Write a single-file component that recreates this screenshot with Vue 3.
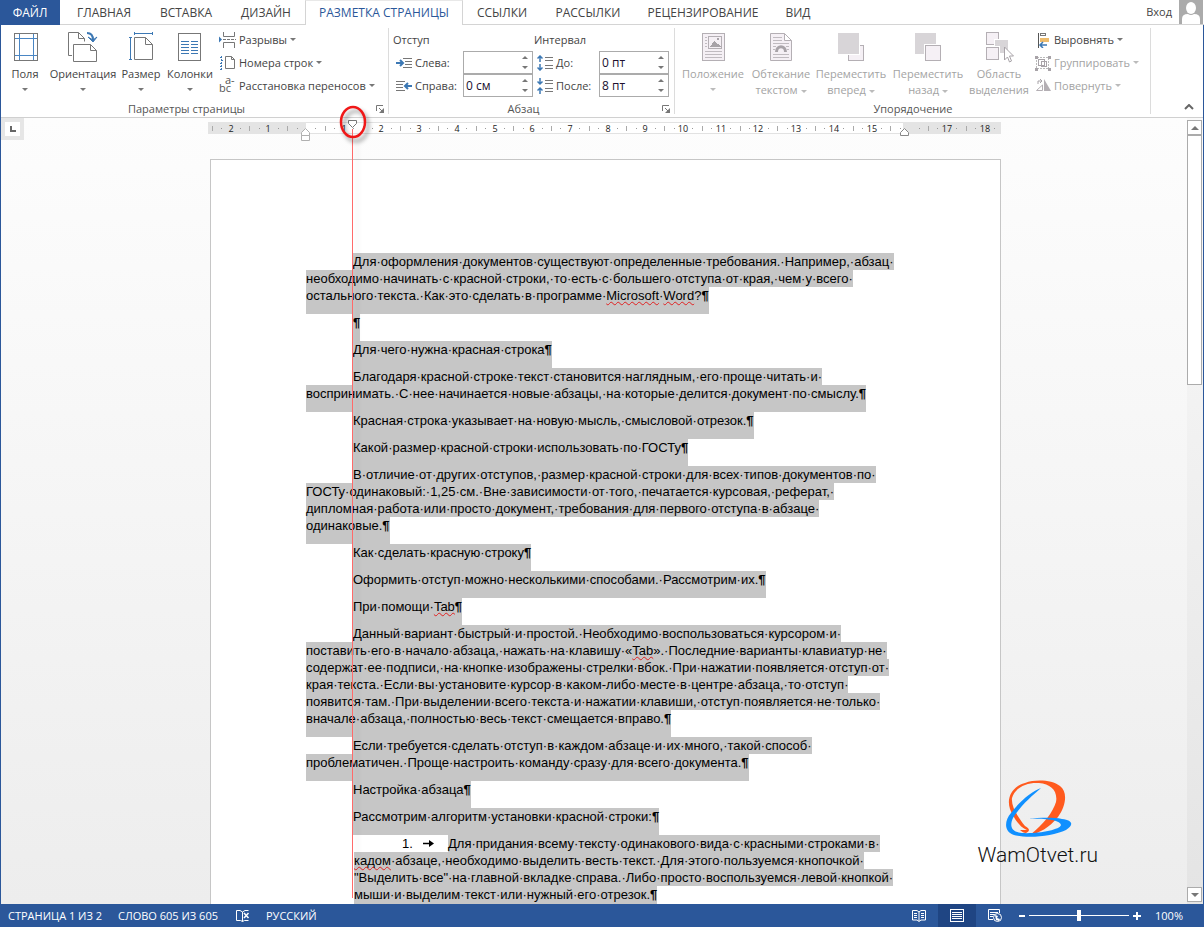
<script setup>
import { ref } from 'vue'

const tabs = [
  { name: 'ГЛАВНАЯ', size: 'w82' },
  { name: 'ВСТАВКА', size: 'w82' },
  { name: 'ДИЗАЙН', size: 'w78' },
  { name: 'РАЗМЕТКА СТРАНИЦЫ', size: 'w158', active: true },
  { name: 'ССЫЛКИ', size: 'w78' },
  { name: 'РАССЫЛКИ', size: 'w94' },
  { name: 'РЕЦЕНЗИРОВАНИЕ', size: 'w136' },
  { name: 'ВИД', size: 'w54' },
]

const left = ref('')
const right = ref('0 см')
const before = ref('0 пт')
const after = ref('8 пт')
const zoom = ref(50)

const origin = 98
const cm = 37.7
const rulerNumbers = [-2, -1, 1, 2, 3, 4, 5, 6, 7, 8, 9, 10, 11, 12, 13, 14, 15, 17, 18].map((n) => ({
  label: Math.abs(n),
  x: Math.round(origin + n * cm),
}))
const halves = Array.from({ length: 21 }, (_, i) => Math.round(origin + (i - 2.5) * cm) + 0.5)
const quarters = []
for (let i = -2; i <= 18; i++) {
  quarters.push(Math.round(origin + (i - 0.25) * cm))
  quarters.push(Math.round(origin + (i + 0.25) * cm))
}

// Text between underscores is marked as misspelled.
const source = [
  ['Для оформления документов существуют определенные требования. Например, абзац ', 'необходимо начинать с красной строки, то есть с большего отступа от края, чем у всего ', 'остального текста. Как это сделать в программе _Microsoft_ _Word_?¶'],
  ['¶'],
  ['Для чего нужна красная строка¶'],
  ['Благодаря красной строке текст становится наглядным, его проще читать и ', 'воспринимать. С нее начинается новые абзацы, на которые делится документ по смыслу.¶'],
  ['Красная строка указывает на новую мысль, смысловой отрезок.¶'],
  ['Какой размер красной строки использовать по ГОСТу¶'],
  ['В отличие от других отступов, размер красной строки для всех типов документов по ', 'ГОСТу одинаковый: 1,25 см. Вне зависимости от того, печатается курсовая, реферат, ', 'дипломная работа или просто документ, требования для первого отступа в абзаце ', 'одинаковые.¶'],
  ['Как сделать красную строку¶'],
  ['Оформить отступ можно несколькими способами. Рассмотрим их.¶'],
  ['При помощи _Tab_¶'],
  ['Данный вариант быстрый и простой. Необходимо воспользоваться курсором и ', 'поставить его в начало абзаца, нажать на клавишу «_Tab_». Последние варианты клавиатур не ', 'содержат ее подписи, на кнопке изображены стрелки вбок. При нажатии появляется отступ от ', 'края текста. Если вы установите курсор в каком-либо месте в центре абзаца, то отступ ', 'появится там. При выделении всего текста и нажатии клавиши, отступ появляется не только ', 'вначале абзаца, полностью весь текст смещается вправо.¶'],
  ['Если требуется сделать отступ в каждом абзаце и их много, такой способ ', 'проблематичен. Проще настроить команду сразу для всего документа.¶'],
  ['Настройка абзаца¶'],
  ['Рассмотрим алгоритм установки красной строки:¶'],
]
const listSource = ['Для придания всему тексту одинакового вида с красными строками в ', '_кадом_ абзаце, необходимо выделить весть текст. Для этого пользуемся кнопочкой ', '"Выделить все" на главной вкладке справа. Либо просто воспользуемся левой кнопкой ', 'мыши и выделим текст или нужный его отрезок.¶']

const split = (line) =>
  line
    .replace(/ /g, '·')
    .split(/(_[^_]+_|¶)/)
    .filter(Boolean)
    .map((s) => ({ text: s.replace(/_/g, ''), wrong: s[0] === '_', mark: s === '¶' }))
const paragraphs = source.map((p) => p.map(split))
const listLines = listSource.map(split)
</script>

<template>
  <div class="window">
    <nav class="tabs">
      <button class="file">ФАЙЛ</button>
      <button v-for="t in tabs" :key="t.name" class="tab" :class="[t.size, { active: t.active }]">{{ t.name }}</button>
      <span class="grow"></span>
      <a class="login" href="#">Вход</a>
      <svg class="avatar" viewBox="0 0 24 24" width="24" height="24"><rect width="24" height="24" fill="#ababab" /><ellipse cx="12" cy="8" rx="5" ry="6" fill="#fff" /><path d="M3 24v-5q0-5 6-5 3 2 6 0 6 0 6 5v5z" fill="#fff" /></svg>
    </nav>

    <div class="ribbon">
      <section class="group setup">
        <div class="tools">
          <button class="big w48">
            <svg width="32" height="32" viewBox="0 0 32 32" fill="none" shape-rendering="crispEdges"><path d="M10.500 2v28M24.500 2v28M5 7.500h23M5 24.500h23" stroke="#4a86c4" /><rect x="5.500" y="2.500" width="23" height="27" stroke="#777" /></svg>
            <span>Поля</span><i class="arrow"></i>
          </button>
          <button class="big w68">
            <svg width="32" height="32" viewBox="0 0 32 32" fill="none"><path d="M5 24.500H1.500v-23h10l6 6v3M11.500 1.500v6h6" stroke="#777" /><path d="M6.500 13.500h17l6 6v11h-23zM23.500 13.500v6h6" fill="#fff" stroke="#777" /><path d="M20 2c5 0 6 3 6 7" stroke="#3c78b4" stroke-width="2" /><path d="M21 6l5 3 4-3-4 5z" fill="#3c78b4" stroke="#3c78b4" /></svg>
            <span>Ориентация</span><i class="arrow"></i>
          </button>
          <button class="big w48">
            <svg width="32" height="32" viewBox="0 0 32 32" fill="none"><path d="M9.500 1v3M27.500 1v3M9 2.500h18M4 6.500h3M4 28.500h3M5.500 7v21" stroke="#3c78b4" shape-rendering="crispEdges" /><path d="M9.500 6.500h11l7 7v15h-18zM20.500 6.500v7h7" fill="#fff" stroke="#777" /></svg>
            <span>Размер</span><i class="arrow"></i>
          </button>
          <button class="big w50">
            <svg width="32" height="32" viewBox="0 0 32 32" fill="none" shape-rendering="crispEdges"><rect x="4.500" y="2.500" width="22" height="27" stroke="#777" /><path d="M7 10.500h8M17 10.500h7M7 13.500h8M17 13.500h7M7 16.500h8M17 16.500h7M7 19.500h8M17 19.500h7M7 22.500h8M17 22.500h7" stroke="#3c78b4" /></svg>
            <span>Колонки</span><i class="arrow"></i>
          </button>
          <div class="stack">
            <button class="small">
              <svg width="17" height="16" viewBox="0 0 17 16" fill="none"><path d="M4.500 0v4.500h11V0M4.500 16v-5.500h11V16" stroke="#777" /><path d="M4 7.500h13" stroke="#777" stroke-dasharray="3 1" /><path d="M0 4.500l3 3-3 3z" fill="#3c78b4" /></svg>
              <span>Разрывы</span><i class="arrow"></i>
            </button>
            <button class="small">
              <svg width="17" height="16" viewBox="0 0 17 16" fill="none"><path d="M6.500 1.500h6l3 3v9h-9zM12.500 1.500v3h3" stroke="#777" /><path d="M2.500 1v14M1 2.500h1M4 5.500H1M1 8.500h3M1 11.500h3M1 14.500h3" stroke="#3c78b4" stroke-dasharray="2 1" /></svg>
              <span>Номера строк</span><i class="arrow"></i>
            </button>
            <button class="small">
              <svg class="hyphen" width="17" height="16" viewBox="0 0 17 16"><text x="0" y="14" class="glyph">bc</text><text x="6" y="6" class="glyph">a-</text></svg>
              <span>Расстановка переносов</span><i class="arrow"></i>
            </button>
          </div>
        </div>
        <div class="caption"><span>Параметры страницы</span>
          <button class="launcher" aria-label="Параметры страницы"><svg width="8" height="8" viewBox="0 0 8 8" fill="none" stroke="#777"><path d="M.500 6V.500H7M3 3l3 3" /><path d="M8 3v5H3z" fill="#777" stroke="none" /></svg></button>
        </div>
      </section>

      <section class="group para">
        <div class="tools">
          <div class="fields">
            <div class="heading">Отступ</div>
            <div class="field">
              <label for="left"><svg width="16" height="16" viewBox="0 0 16 16" fill="none"><path d="M7 3.500h9M9 6.500h7M9 9.500h7M7 12.500h9" stroke="#777" /><path d="M0 8h6M4 5l3 3-3 3" stroke="#3c78b4" stroke-width="2" /></svg>Слева:</label>
              <div class="spin"><input id="left" v-model="left" type="text" /><div class="steps"><button aria-label="Больше"><i class="arrow up"></i></button><button aria-label="Меньше"><i class="arrow"></i></button></div></div>
            </div>
            <div class="field">
              <label for="right"><svg width="16" height="16" viewBox="0 0 16 16" fill="none"><path d="M0 3.500h9M0 6.500h7M0 9.500h7M0 12.500h9" stroke="#777" /><path d="M16 8h-6M12 5L9 8l3 3" stroke="#3c78b4" stroke-width="2" /></svg>Справа:</label>
              <div class="spin"><input id="right" v-model="right" type="text" /><div class="steps"><button aria-label="Больше"><i class="arrow up"></i></button><button aria-label="Меньше"><i class="arrow"></i></button></div></div>
            </div>
          </div>
          <div class="fields second">
            <div class="heading">Интервал</div>
            <div class="field">
              <label for="before"><svg width="16" height="16" viewBox="0 0 16 16" fill="none"><path d="M8 2.500h8M8 5.500h8M8 10.500h8M8 13.500h8" stroke="#777" /><path d="M3 7V1M.500 3.500L3 1l2.500 2.500M3 9v6M.500 12.500L3 15l2.500-2.500" stroke="#3c78b4" stroke-width="1.500" /></svg>До:</label>
              <div class="spin"><input id="before" v-model="before" type="text" /><div class="steps"><button aria-label="Больше"><i class="arrow up"></i></button><button aria-label="Меньше"><i class="arrow"></i></button></div></div>
            </div>
            <div class="field">
              <label for="after"><svg width="16" height="16" viewBox="0 0 16 16" fill="none"><path d="M8 2.500h8M8 5.500h8M8 10.500h8M8 13.500h8" stroke="#777" /><path d="M3 0v6M.500 3.500L3 6l2.500-2.500M3 16v-6M.500 12.500L3 10l2.500 2.500" stroke="#3c78b4" stroke-width="1.500" /></svg>После:</label>
              <div class="spin"><input id="after" v-model="after" type="text" /><div class="steps"><button aria-label="Больше"><i class="arrow up"></i></button><button aria-label="Меньше"><i class="arrow"></i></button></div></div>
            </div>
          </div>
        </div>
        <div class="caption"><span>Абзац</span>
          <button class="launcher" aria-label="Абзац"><svg width="8" height="8" viewBox="0 0 8 8" fill="none" stroke="#777"><path d="M.500 6V.500H7M3 3l3 3" /><path d="M8 3v5H3z" fill="#777" stroke="none" /></svg></button>
        </div>
      </section>

      <section class="group arrange">
        <div class="tools">
          <button class="big w72" disabled>
            <svg width="32" height="32" viewBox="0 0 32 32" fill="none" shape-rendering="crispEdges"><rect x="5.500" y="2.500" width="22" height="27" fill="#f5f0f5" stroke="#b4afb4" /><rect x="11.500" y="5.500" width="13" height="12" fill="#f5f0f5" stroke="#b4afb4" /><path d="M13 16l4-6 3 3 1-1 3 4z" fill="#a8a3a8" /><circle cx="21" cy="8" r="1.500" fill="#a8a3a8" /><path d="M8 6.500h2M8 9.500h2M8 12.500h2M8 15.500h2M8 20.500h17M8 23.500h17M8 26.500h17" stroke="#c0bbc0" /></svg>
            <span>Положение</span><i class="arrow"></i>
          </button>
          <button class="big w64" disabled>
            <svg width="32" height="32" viewBox="0 0 32 32" fill="none"><path d="M5.500 2.500h14l7 7v20h-21zM19.500 2.500v7h7" fill="#f5f0f5" stroke="#b4afb4" /><path d="M8 6.500h9M8 9.500h9M8 12.500h16M8 15.500h3M21 15.500h3M8 18.500h2M22 18.500h2M8 23.500h16M8 26.500h16" stroke="#c0bbc0" /><path d="M11.500 21c0-7 9-7 9 0" stroke="#a8a3a8" stroke-width="3" /></svg>
            <span>Обтекание<br />текстом <i class="arrow"></i></span>
          </button>
          <button class="big w76" disabled>
            <svg width="32" height="32" viewBox="0 0 32 32" shape-rendering="crispEdges"><rect x="13.500" y="14.500" width="15" height="15" fill="#f5f0f5" stroke="#b4afb4" /><rect x="2" y="1" width="23" height="23" fill="#fff" /><rect x="3" y="2" width="21" height="21" fill="#d8d5d8" /></svg>
            <span>Переместить<br />вперед <i class="arrow"></i></span>
          </button>
          <button class="big w78" disabled>
            <svg width="32" height="32" viewBox="0 0 32 32" shape-rendering="crispEdges"><rect x="3" y="2" width="21" height="21" fill="#d8d5d8" /><rect x="12" y="13" width="18" height="18" fill="#fff" /><rect x="13.500" y="14.500" width="15" height="15" fill="#f5f0f5" stroke="#b4afb4" /></svg>
            <span>Переместить<br />назад <i class="arrow"></i></span>
          </button>
          <button class="big w64" disabled>
            <svg width="32" height="32" viewBox="0 0 32 32"><rect x="12" y="9" width="13" height="13" fill="#d8d5d8" /><rect x="3.500" y="1.500" width="12" height="12" fill="#f5f0f5" stroke="#b4afb4" /><rect x="11" y="8" width="6" height="7" fill="#fff" /><rect x="12" y="9" width="6" height="7" fill="#d8d5d8" /><rect x="2.500" y="15.500" width="14" height="14" fill="#fff" stroke="#fff" /><rect x="3.500" y="16.500" width="12" height="12" fill="#f5f0f5" stroke="#b4afb4" /><path d="M21.500 16v13l3-3 2 5 2-1-2-5h4z" fill="#fff" stroke="#a8a3a8" /></svg>
            <span>Область<br />выделения</span>
          </button>
          <div class="stack">
            <button class="small">
              <svg width="16" height="16" viewBox="0 0 16 16" fill="none" shape-rendering="crispEdges"><path d="M3.500 1v15" stroke="#555" /><rect x="5.500" y="1.500" width="5" height="2" stroke="#777" /><rect x="5" y="6" width="9" height="4" fill="#eebc6c" /><path d="M5 13h7M8 10l-3 3 3 3" stroke="#3c78b4" stroke-width="1.500" shape-rendering="auto" /></svg>
              <span>Выровнять</span><i class="arrow"></i>
            </button>
            <button class="small" disabled>
              <svg width="16" height="16" viewBox="0 0 16 16" fill="none" shape-rendering="crispEdges"><rect x="1.500" y="2.500" width="12" height="11" stroke="#bbb" stroke-dasharray="2 1" /><path d="M3.500 4.500h6v6h-6zM6.500 6.500h5v5h-5z" stroke="#a8a3a8" /><path d="M0 1h3v3H0zM13 1h3v3h-3zM0 13h3v3H0zM13 13h3v3h-3z" fill="#a8a3a8" /></svg>
              <span>Группировать</span><i class="arrow"></i>
            </button>
            <button class="small" disabled>
              <svg width="16" height="16" viewBox="0 0 16 16" fill="none"><path d="M9 1v12h7z" fill="#b4afb4" /><path d="M7.500 7v5.500h-6z" stroke="#b4afb4" /><path d="M3 6V3h4M5 1l2 2-2 2" stroke="#a8a3a8" /></svg>
              <span>Повернуть</span><i class="arrow"></i>
            </button>
          </div>
        </div>
        <div class="caption"><span>Упорядочение</span></div>
      </section>
      <span class="grow"></span>
      <button class="collapse" aria-label="Свернуть ленту"><svg width="10" height="6" viewBox="0 0 10 6" fill="none"><path d="M1 5l4-4 4 4" stroke="#666" stroke-width="2" /></svg></button>
    </div>

    <main class="work">
      <div class="gutter"><button class="tabstop" aria-label="Табуляция"><svg width="15" height="14" viewBox="0 0 15 14"><path d="M6 4v5h5" fill="none" stroke="#666" stroke-width="2" /></svg></button></div>
      <div class="canvas">
        <svg class="ruler" width="795" height="26" viewBox="0 0 795 26">
          <rect x="0" y="4" width="793" height="12" fill="#e4e4e4" />
          <rect x="98" y="4" width="597" height="12" fill="#fff" />
          <path d="M98 4.500h597M98 15.500h597" stroke="#e2e2e2" />
          <path v-for="x in halves" :key="'h' + x" :d="`M${x} 8v5`" stroke="#aaa" />
          <rect v-for="x in quarters" :key="'q' + x" :x="x" y="10" width="1" height="1" fill="#999" />
          <text v-for="n in rulerNumbers" :key="n.x" :x="n.x" y="14" class="num">{{ n.label }}</text>
          <path d="M93.500 17.500v-3l4-4 4 4v3zM93.500 17.500h8v5h-8z" fill="#fff" stroke="#b0b0b0" />
          <path d="M692.500 17.500v-3l4-4 4 4v3z" fill="#fff" stroke="#888" />
          <path d="M140.500 2.500h8v3l-4 4-4-4z" fill="#fff" stroke="#777" />
        </svg>
        <article class="page">
          <p v-for="(p, i) in paragraphs" :key="i">
            <span v-for="(line, j) in p" :key="j" class="line"><span v-for="(part, k) in line" :key="k" :class="{ wrong: part.wrong, mark: part.mark }">{{ part.text }}</span></span>
          </p>
          <div class="item">
            <div class="marker"><span>1.</span><svg width="11" height="7" viewBox="0 0 11 7"><path d="M0 3.500h7" stroke="#000" stroke-width="1.500" /><path d="M6 0l5 3.500L6 7z" /></svg></div>
            <p class="text"><span v-for="(line, j) in listLines" :key="j" class="line"><span v-for="(part, k) in line" :key="k" :class="{ wrong: part.wrong, mark: part.mark }">{{ part.text }}</span></span></p>
          </div>
        </article>
        <div class="overlay">
          <div class="guide"></div>
          <svg class="ring" width="40" height="44" viewBox="0 0 40 44" fill="none"><ellipse cx="16" cy="19" rx="12" ry="15" stroke="#f01818" stroke-width="2.500" /></svg>
        </div>
      </div>
      <div class="scrollbar">
        <button aria-label="Вверх"><i class="arrow up"></i></button>
        <div class="thumb"></div>
        <span class="grow"></span>
        <button aria-label="Вниз"><i class="arrow"></i></button>
      </div>
      <div class="brand">
        <svg width="70" height="60" viewBox="0 0 70 60"><path fill="#ff5a1e" d="M24 51C17 49 10 38 7 30C3 18 10 7 22 4C33 0 49 1 57 7C65 13 63 27 55 38C46 49 36 54 27 56C41 45 50 33 53 23C55 12 48 5 36 4C25 3 12 8 9 19C8 28 15 38 22 47C26 49 28 52 23 54C21 54 19 53 17 51Z" /><path fill="#1090ff" d="M38 9C29 12 17 22 8 34C1 42 1 53 11 56C26 60 50 57 63 51C71 46 70 41 59 40C49 38 34 39 25 40C43 39 57 41 58 46C57 51 34 55 19 54C9 53 6 48 10 39C18 26 29 17 38 9Z" /></svg>
        <span>WamOtvet.ru</span>
      </div>
    </main>

    <footer class="status">
      <span class="pages">СТРАНИЦА 1 ИЗ 2</span>
      <span class="words">СЛОВО 605 ИЗ 605</span>
      <button class="proof" aria-label="Правописание"><svg width="16" height="14" viewBox="0 0 16 14" fill="none" stroke="#fff"><path d="M7.500 12.500l-2-1H1.500v-10H5l2.500 1.500v9.500l2-1h4M7.500 3L10 1.500h3.500" /><path d="M9 4l4.500 5M13.500 4L9 9" stroke-width="1.500" /></svg></button>
      <span>РУССКИЙ</span>
      <span class="grow"></span>
      <button class="view" aria-label="Режим чтения"><svg width="14" height="12" viewBox="0 0 14 12" fill="none" stroke="#fff"><path d="M7 11.500L5 10H.500V.500H5L7 2l2-1.500h4.500V10H9zM7 2v9M2 3.500h3M2 5.500h3M2 7.500h3M9 3.500h3M9 5.500h3M9 7.500h3" /></svg></button>
      <button class="view on" aria-label="Разметка страницы"><svg width="14" height="13" viewBox="0 0 14 13" fill="none" stroke="#fff" shape-rendering="crispEdges"><path d="M.500.500h13v12H.500zM2 3.500h10M2 5.500h10M2 7.500h10M2 9.500h10" /></svg></button>
      <button class="view" aria-label="Веб-документ"><svg width="14" height="13" viewBox="0 0 14 13" fill="none" stroke="#fff"><path d="M5 10.500H.500V.500h11V4M2 3.500h8M2 5.500h5M2 7.500h3" /><circle cx="9.500" cy="8.500" r="4" fill="#2b579a" /><path d="M7 6l3 1-1 2 3 1-1 2-3-1z" fill="#fff" stroke="none" /></svg></button>
      <button class="sign minus" aria-label="Уменьшить"><svg width="8" height="8" viewBox="0 0 8 8"><path d="M1 4h6" stroke="#fff" stroke-width="2" /></svg></button>
      <input v-model="zoom" type="range" min="0" max="100" aria-label="Масштаб" />
      <button class="sign" aria-label="Увеличить"><svg width="8" height="8" viewBox="0 0 8 8"><path d="M0 4h8M4 0v8" stroke="#fff" stroke-width="2" /></svg></button>
      <button class="percent">100%</button>
    </footer>
  </div>
</template>

<style>
body { background: #2b579a; }
</style>

<style scoped>
* { box-sizing: border-box; }
.window { height: 100vh; display: flex; flex-direction: column; background: #fff; color: #444; font: 12px/16px "Open Sans", "Noto Sans", sans-serif; overflow: hidden; }
button { font: inherit; color: inherit; background: none; border: 0; padding: 0; margin: 0; white-space: nowrap; }
button:disabled { color: #a3a3a3; }
.grow { flex: 1; }
.arrow { display: inline-block; border: 3px solid transparent; border-top-color: #777; border-bottom: 0; vertical-align: middle; }
.arrow.up { border-top: 0; border-bottom: 3px solid #777; }
button:disabled .arrow { border-top-color: #bbb; }

.w48 { width: 48px; } .w50 { width: 50px; } .w54 { width: 54px; } .w64 { width: 64px; } .w68 { width: 68px; }
.w72 { width: 72px; } .w76 { width: 76px; } .w78 { width: 78px; } .w82 { width: 82px; } .w94 { width: 94px; }
.w136 { width: 136px; } .w158 { width: 158px; }

.tabs { display: flex; flex: none; height: 25px; padding-right: 1px; box-shadow: inset 0 -1px #d4d4d4; }
.file { width: 60px; margin-right: 3px; background: #2b579a; color: #fff; }
.tab { flex: none; }
.tab.active { color: #2b579a; background: #fff; border: 1px solid #d4d4d4; border-bottom: 0; border-top-color: #e8e8e8; }
.login { color: #444; text-decoration: none; font-size: 11px; line-height: 24px; margin-right: 7px; }
.avatar { flex: none; }

.ribbon { flex: none; display: flex; height: 93px; border: solid #2b579a; border-width: 0 1px; box-shadow: inset 0 -1px #d0d0d0; font-size: 11px; }
.group { position: relative; display: flex; flex-direction: column; flex: none; }
.group::after { content: ""; position: absolute; right: 0; top: 3px; bottom: 4px; border-right: 1px solid #dcdcdc; }
.setup { width: 388px; }
.para { width: 286px; }
.arrange { width: 476px; }
.tools { display: flex; height: 76px; }
.caption { display: flex; align-items: center; height: 16px; color: #555; }
.caption span { flex: 1; text-align: center; }
.setup .caption span, .para .caption span { padding-right: 4px; }
.launcher { width: 8px; height: 8px; margin-right: 5px; display: flex; }
.arrange .tools { padding-left: 2px; }
.big { flex: none; display: flex; flex-direction: column; align-items: center; padding-top: 6px; }
.big svg { flex: none; margin-bottom: 3px; }
.big > .arrow { margin-top: 6px; }
.stack { padding: 3px 0 0 4px; }
.small { display: flex; align-items: center; height: 23px; gap: 3px; }
.hyphen { overflow: visible; }
.glyph { font: 11px "Open Sans", sans-serif; fill: #555; }
.fields { padding: 3px 0 0 4px; width: 145px; }
.fields.second { padding-left: 0; width: 135px; }
.heading { height: 23px; line-height: 23px; }
.field { display: flex; height: 23px; }
.field label { flex: 1; display: flex; align-items: center; gap: 3px; padding-left: 3px; white-space: nowrap; }
.spin { flex: none; display: flex; width: 70px; border: 1px solid #ababab; background: #fff; }
.fields:not(.second) .spin { margin-right: 1px; }
.spin input { flex: 1; width: 40px; border: 0; padding: 0 2px; font: inherit; font-size: 12px; color: #201030; background: none; outline: 0; }
.steps { width: 14px; display: flex; flex-direction: column; padding: 1px 0; }
.steps button { flex: 1; display: flex; align-items: center; justify-content: center; }
.collapse { align-self: flex-end; width: 10px; margin: 0 9px 4px 0; }

.work { position: relative; flex: 1; min-height: 0; display: flex; border: solid #2b579a; border-width: 0 1px; background: linear-gradient(#fdfdfd, #ededed); clip-path: inset(-20px 0 0 0); }
.gutter { flex: none; width: 23px; }
.tabstop { display: flex; align-items: center; justify-content: center; width: 23px; height: 22px; background: #e6e6e6; }
.tabstop svg { background: #fff; }
.canvas { position: relative; flex: 1; min-width: 0; display: flex; flex-direction: column; align-items: center; }
.ruler { flex: none; margin-bottom: 15px; }
.num { font: 9px "Open Sans", sans-serif; fill: #222; text-anchor: middle; }
.page { flex: none; width: 791px; padding: 93px 95px; background: #fff; border: 1px solid #c6c6c6; color: #000; font: 13px/17px "Liberation Sans", Arial, sans-serif; }
p { margin: 0; }
.line { display: block; width: fit-content; white-space: nowrap; background: #c6c6c6; }
.line:first-child { margin-left: 47px; }
.line:last-child { padding-bottom: 10px; }
.wrong { text-decoration: underline wavy #e02020 1px; text-underline-offset: 1px; text-decoration-skip-ink: none; }
.mark { font-weight: bold; }
.item { position: relative; }
.item .text { padding-left: 48px; }
.item .line:first-child { margin-left: 94px; }
.item .text .line:first-child { position: relative; }
.marker { position: absolute; top: 0; left: 96px; display: flex; align-items: center; gap: 10px; }
.overlay { position: absolute; top: 0; bottom: 0; width: 791px; pointer-events: none; }
.guide { position: absolute; top: 11px; bottom: 6px; left: 142px; width: 1px; background: #ff6a6a; box-shadow: 5px 0 4px rgba(0, 0, 0, 0.1); }
.ring { position: absolute; top: -15px; left: 127px; filter: drop-shadow(3px 4px 2px rgba(0, 0, 0, 0.4)); }

.scrollbar { flex: none; width: 16px; padding: 2px 1px 2px 0; display: flex; flex-direction: column; background: linear-gradient(#fafafa, #e4e4e4); }
.scrollbar button { height: 15px; display: flex; align-items: center; justify-content: center; border: 1px solid #ababab; background: #fff; }
.scrollbar .arrow { border-width: 4px 4px 0; }
.scrollbar .arrow.up { border-width: 0 4px 4px; }
.thumb { height: 250px; border: 1px solid #ababab; background: #fff; }
.brand { position: absolute; right: 105px; bottom: 34px; display: flex; flex-direction: column; align-items: center; color: #111; font: 300 21px/29px Roboto, sans-serif; }
.brand svg { margin-bottom: 2px; }

.status { flex: none; height: 23px; display: flex; align-items: center; padding: 0 21px 0 8px; background: #2b579a; color: #fff; font-size: 11px; }
.pages { margin-right: 16px; }
.words { margin-right: 17px; }
.proof { width: 16px; height: 14px; margin-right: 15px; }
.view { width: 38px; height: 23px; display: flex; align-items: center; justify-content: center; }
.view.on { background: #1f4583; }
.sign { width: 8px; height: 8px; display: flex; }
.sign.minus { margin-left: 4px; }
.percent { width: 28px; margin-left: 14px; }
input[type="range"] { appearance: none; width: 100px; height: 12px; margin: 0 4px 0 3px; background: linear-gradient(#fff, #fff) center / 100% 1px no-repeat; }
input[type="range"]::-webkit-slider-thumb { appearance: none; width: 4px; height: 11px; background: #fff; }
</style>
